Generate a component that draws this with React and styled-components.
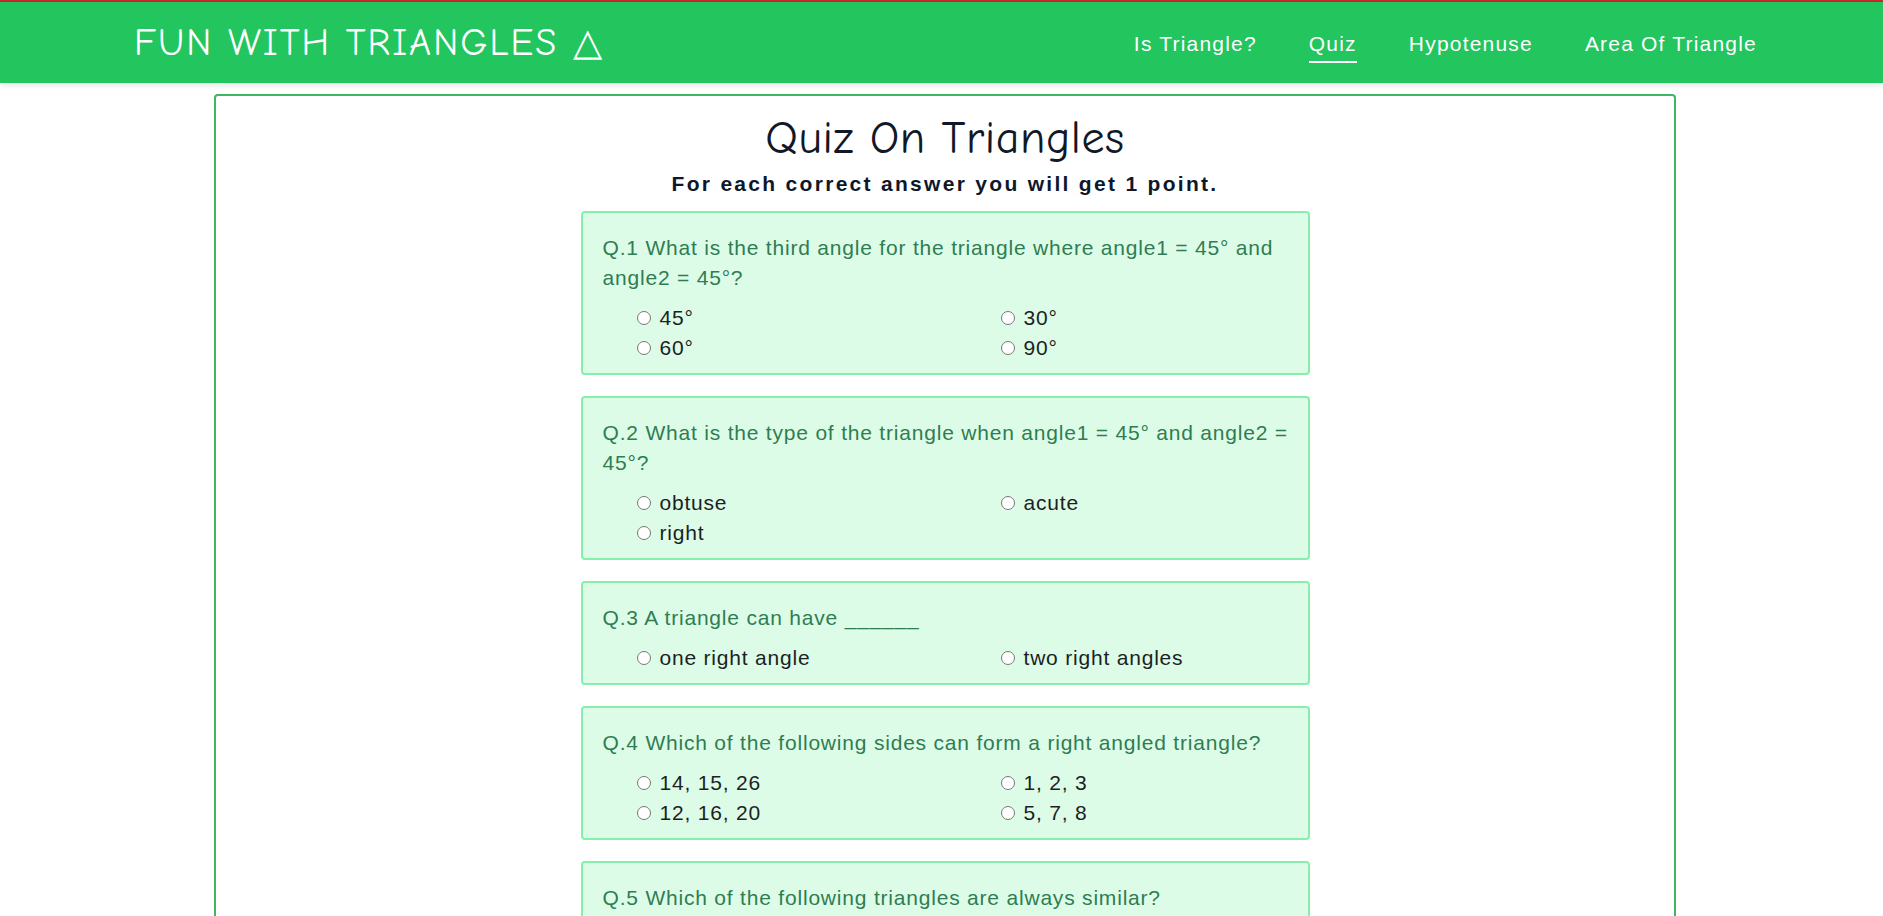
import React from "react";
import styled, { createGlobalStyle } from "styled-components";

const GlobalStyle = createGlobalStyle`
  body {
    margin: 0;
    background: #ffffff;
    font-family: "Liberation Sans", Arial, sans-serif;
  }
  * {
    box-sizing: border-box;
  }
`;

const Header = styled.header`
  height: 83px;
  border-top: 2px solid #c62828;
  background-color: #22c55e;
  box-shadow: 0 2px 6px rgba(0, 0, 0, 0.12);
  padding: 0 126px 0 134px;

  display: flex;
  align-items: center;
  justify-content: space-between;
`;

const Logo = styled.div`
  font-family: "Comic Sans MS", "Comic Neue", "Lato", sans-serif;
  font-size: 38px;
  color: #ffffff;
  letter-spacing: 2px;
`;

const Nav = styled.nav`
  display: flex;
  gap: 52px;
`;

const NavLink = styled.a`
  font-size: 21px;
  letter-spacing: 1.2px;
  line-height: 24px;
  color: #ffffff;
  text-decoration: none;
  padding: 10px 0 5px;
  border-bottom: 2px solid ${(p) => (p.$active ? "#ffffff" : "transparent")};
  cursor: pointer;
`;

const Page = styled.div`
  padding-left: 7px;
`;

const Main = styled.main`
  width: 1462px;
  margin: 11px auto 0;
  border: 2px solid #3bb862;
  border-radius: 4px;
  padding-bottom: 40px;

  display: flex;
  flex-direction: column;
  align-items: center;
`;

const Title = styled.h1`
  font-family: "Comic Sans MS", "Comic Neue", "Lato", sans-serif;
  font-weight: 400;
  font-size: 46px;
  letter-spacing: 0.5px;
  line-height: 56px;
  margin: 15px 0 0;
  color: #111827;
`;

const Subtitle = styled.p`
  font-size: 21px;
  font-weight: 700;
  letter-spacing: 2.3px;
  line-height: 26px;
  margin: 4px 0 14px;
  color: #0f172a;
`;

const Card = styled.div`
  width: 50%;
  background-color: #dcfce7;
  border: 2px solid #86efac;
  border-radius: 4px;
  padding: 20px 14px 10px 20px;
  margin-bottom: 21px;
`;

const Question = styled.p`
  font-size: 21px;
  letter-spacing: 0.8px;
  line-height: 30px;
  margin: 0 0 10px;
  color: #2f7d52;
`;

const Options = styled.div`
  display: grid;
  grid-template-columns: 364px 1fr;
  margin-left: 29px;
`;

const Option = styled.label`
  display: flex;
  align-items: center;
  height: 30px;
  font-size: 21px;
  letter-spacing: 0.8px;
  color: #1c1f24;
`;

const Radio = styled.input`
  width: 14px;
  height: 14px;
  margin: 0 9px 0 5px;
`;

const questions = [
  {
    q: "Q.1 What is the third angle for the triangle where angle1 = 45° and angle2 = 45°?",
    options: ["45°", "30°", "60°", "90°"],
  },
  {
    q: "Q.2 What is the type of the triangle when angle1 = 45° and angle2 = 45°?",
    options: ["obtuse", "acute", "right"],
  },
  {
    q: "Q.3 A triangle can have ______",
    options: ["one right angle", "two right angles"],
  },
  {
    q: "Q.4 Which of the following sides can form a right angled triangle?",
    options: ["14, 15, 26", "1, 2, 3", "12, 16, 20", "5, 7, 8"],
  },
  {
    q: "Q.5 Which of the following triangles are always similar?",
    options: ["equilateral triangle", "isosceles triangle", "right angled triangle"],
  },
];

function App() {
  return (
    <>
      <GlobalStyle />
      <Header>
        <Logo>FUN WITH TRIANGLES △</Logo>
        <Nav>
          <NavLink>Is Triangle?</NavLink>
          <NavLink $active>Quiz</NavLink>
          <NavLink>Hypotenuse</NavLink>
          <NavLink>Area Of Triangle</NavLink>
        </Nav>
      </Header>
      <Page>
        <Main>
          <Title>Quiz On Triangles</Title>
          <Subtitle>For each correct answer you will get 1 point.</Subtitle>
          {questions.map((item, i) => (
            <Card key={i}>
              <Question>{item.q}</Question>
              <Options>
                {item.options.map((opt) => (
                  <Option key={opt}>
                    <Radio type="radio" name={`q${i}`} />
                    {opt}
                  </Option>
                ))}
              </Options>
            </Card>
          ))}
        </Main>
      </Page>
    </>
  );
}

export default App;
